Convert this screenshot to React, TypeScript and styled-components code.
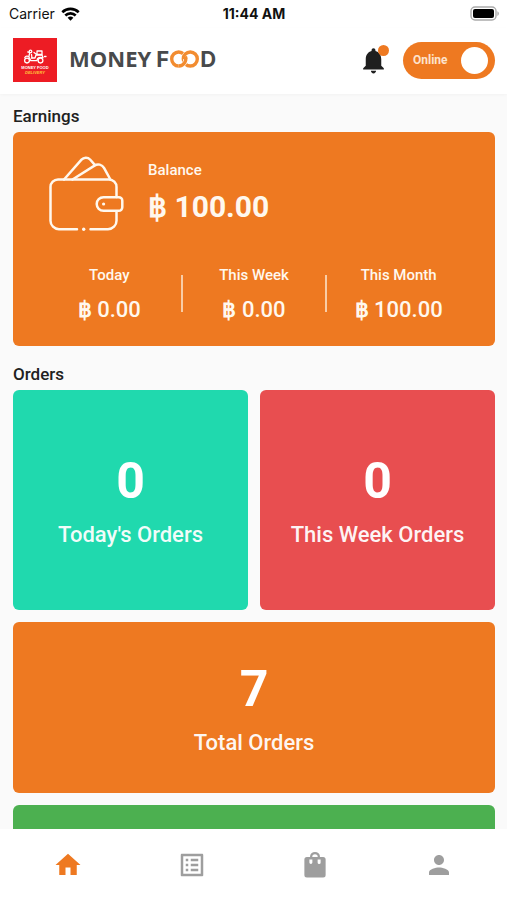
import React, { useState } from 'react';
import styled, { createGlobalStyle } from 'styled-components';

const ORANGE = '#ee7921';
const GREY = '#9e9e9e';

const GlobalStyle = createGlobalStyle`
  * { box-sizing: border-box; }
  body {
    margin: 0;
    background: #fafafa;
    color: #212121;
    font-family: Roboto, "Noto Sans", sans-serif;
  }
  h1, h2, p, dl, dd, dt { margin: 0; font-weight: inherit; }
`;

const Screen = styled.div`
  display: flex;
  flex-direction: column;
  height: 100vh;
`;

const StatusBar = styled.div`
  display: grid;
  grid-template-columns: 1fr auto 1fr;
  align-items: center;
  height: 28px;
  padding: 0 8px 0 9px;
  background: #fff;
  color: #111;
  font: 400 14px/20px Inter, sans-serif;
`;

const Carrier = styled.span`
  display: flex;
  align-items: center;
  gap: 6px;
`;

const Clock = styled.time`
  font-weight: 700;
`;

const BatteryIcon = styled.svg`
  justify-self: end;
`;

const AppBar = styled.header`
  display: flex;
  align-items: center;
  height: 66px;
  padding: 0 12px 2px 13px;
  background: #fff;
  box-shadow: 0 1px 3px rgba(0, 0, 0, 0.03);
`;

const Brand = styled.h1`
  display: flex;
  align-items: baseline;
  margin-left: 12px;
  padding-bottom: 3px;
  color: #484a4c;
  font: 700 22px/28px "Open Sans", sans-serif;
`;

const BrandSecond = styled.span`
  display: flex;
  align-items: center;
  margin-left: 5px;
  font-family: Inter, sans-serif;
`;

const BellButton = styled.button`
  position: relative;
  display: flex;
  margin-left: auto;
  padding: 0;
  border: 0;
  background: none;
  color: #1f1f1f;
`;

const BellDot = styled.span`
  position: absolute;
  top: 0;
  right: 0;
  width: 11px;
  height: 11px;
  border-radius: 50%;
  background: ${ORANGE};
`;

const SwitchLabel = styled.label`
  position: relative;
  display: flex;
  align-items: center;
  justify-content: space-between;
  width: 92px;
  height: 37px;
  margin-left: 14px;
  padding: 0 7px 0 10px;
  border-radius: 19px;
  background: ${ORANGE};
  color: #fde3cd;
  font-size: 12px;
  font-weight: 700;
`;

const SwitchInput = styled.input`
  position: absolute;
  inset: 0;
  width: 100%;
  height: 100%;
  margin: 0;
  opacity: 0;
`;

const SwitchKnob = styled.span<{ $on: boolean }>`
  order: ${({ $on }) => ($on ? 1 : -1)};
  width: 27px;
  height: 27px;
  border-radius: 50%;
  background: #fff;
`;

const Content = styled.main`
  flex: 1;
  min-height: 0;
  padding: 10px 12px 12px 13px;
  overflow-y: auto;
  scrollbar-width: none;
`;

const SectionTitle = styled.h2`
  margin-bottom: 4px;
  font-size: 17px;
  font-weight: 500;
  line-height: 24px;
`;

const EarningsCard = styled.section`
  margin-bottom: 16px;
  padding: 24px 24px 20px;
  border-radius: 6px;
  background: ${ORANGE};
  color: #fff8ee;
`;

const BalanceRow = styled.div`
  display: flex;
  gap: 24px;
  height: 76px;
  padding-left: 12px;
`;

const BalanceText = styled.dl`
  padding-top: 4px;
  font-size: 15px;
  font-weight: 500;
  line-height: 20px;
`;

const BalanceAmount = styled.dd`
  padding-top: 8px;
  font-size: 30px;
  font-weight: 700;
  line-height: 38px;
`;

const Periods = styled.dl`
  display: grid;
  grid-template-columns: repeat(3, 1fr);
  margin-top: 32px;
`;

const Period = styled.div`
  position: relative;
  padding-bottom: 2px;
  text-align: center;
  font-size: 15px;
  font-weight: 500;
  line-height: 22px;

  & + &::before {
    content: "";
    position: absolute;
    top: 11px;
    left: -1px;
    width: 2px;
    height: 37px;
    background: #f9cda6;
  }
`;

const PeriodAmount = styled.dd`
  padding-top: 10px;
  font-size: 22px;
  line-height: 28px;
`;

const Currency = styled.span`
  font-weight: 700;
`;

const OrderGrid = styled.div`
  display: grid;
  grid-template-columns: 1fr 1fr;
  gap: 12px;
`;

const OrderCard = styled.section<{ $color: string; $wide?: boolean }>`
  display: flex;
  flex-direction: column-reverse;
  align-items: center;
  justify-content: center;
  grid-column: ${({ $wide }) => ($wide ? '1 / -1' : 'auto')};
  min-height: ${({ $wide }) => ($wide ? 171 : 220)}px;
  border-radius: 6px;
  background: ${({ $color }) => $color};
  color: #fff;
`;

const OrderCount = styled.p`
  font-size: 50px;
  font-weight: 700;
  line-height: 60px;
`;

const OrderName = styled.h2`
  padding-top: 10px;
  font-size: 22px;
  font-weight: 500;
  line-height: 28px;
  color: rgba(255, 255, 255, 0.95);
`;

const TabBar = styled.nav`
  display: flex;
  flex: none;
  height: 71px;
  padding: 0 6px;
  background: #fff;
`;

const Tab = styled.a<{ $active?: boolean }>`
  display: flex;
  flex: 1;
  align-items: center;
  justify-content: center;
  color: ${({ $active }) => ($active ? ORANGE : GREY)};
`;

const Wifi = () => (
  <svg width="19" height="14" viewBox="0 0 19 14" aria-label="Wi-Fi" fill="none" stroke="#000" strokeWidth="2.6">
    <path d="M1.3 5.2a11.8 11.8 0 0 1 16.4 0" />
    <path d="M4.3 8.5a7.4 7.4 0 0 1 10.4 0" />
    <path d="M9.5 13.8 6.6 10.8a4.3 4.3 0 0 1 5.8 0z" fill="#000" stroke="none" />
  </svg>
);

const Battery = () => (
  <BatteryIcon width="29" height="16" viewBox="0 0 29 16" aria-label="Battery">
    <rect x="1" y="1" width="25" height="13" rx="4" fill="#fff" stroke="#aaa" strokeWidth="1.4" />
    <rect x="3" y="3" width="21" height="9" rx="2" fill="#000" />
    <path d="M27.4 5.2c2 1 2 3.8 0 4.8z" fill="#aaa" />
  </BatteryIcon>
);

const LogoText = styled.text`
  font-family: "Liberation Sans", sans-serif;
  font-weight: 700;
  font-size: 4px;
  text-anchor: middle;
`;

const Logo = () => (
  <svg width="44" height="44" viewBox="0 0 44 44" aria-label="Money Food Delivery">
    <rect width="44" height="44" fill="#ed1c24" />
    <g fill="none" stroke="#fff" strokeWidth="1.3" strokeLinecap="round" strokeLinejoin="round">
      <circle cx="14" cy="22.6" r="2.4" />
      <circle cx="27.5" cy="22.6" r="2.4" />
      <path d="M11.8 19.6c1-1.6 3-1.8 4-.8l2 3.8h6.2c0-3 3-4 6-2.8l-1-2.8h-6l-1 3h-3.5" />
      <path d="M16 18l.8-3.6-2-.4M19 20l-.5-3.5" />
      <circle cx="17.5" cy="13.4" r="1.3" />
      <path d="M24 13h5v3.5h-5zM21 14.5l2 1.5M31.5 18.5h1.5" />
    </g>
    <LogoText x="22" y="31" fill="#fff">MONEY FOOD</LogoText>
    <LogoText x="22" y="36" fill="#ffc23c" fontStyle="italic">DELIVERY</LogoText>
  </svg>
);

const Rings = () => (
  <svg width="31" height="18" viewBox="-1 0 31 18" aria-label="OO" fill="none" stroke="#f28c30" strokeWidth="3.4">
    <circle cx="8.7" cy="9" r="7" />
    <path d="M13.3 9A7 7 0 0 1 20.3 2" stroke="#fff" strokeWidth="4.6" />
    <circle cx="20.3" cy="9" r="7" />
    <path d="M15.7 9A7 7 0 0 1 8.7 16" stroke="#fff" strokeWidth="4.6" />
    <path d="M15.3 6.6A7 7 0 0 1 8.7 16" />
  </svg>
);

const Bell = () => (
  <svg width="31" height="31" viewBox="0 0 24 24" fill="currentColor" aria-hidden="true">
    <path d="M12 22c1.1 0 2-.9 2-2h-4c0 1.1.89 2 2 2zm6-6v-5c0-3.07-1.64-5.64-4.5-6.32V4c0-.83-.67-1.5-1.5-1.5s-1.5.67-1.5 1.5v.68C7.63 5.36 6 7.92 6 11v5l-2 2v1h16v-1l-2-2z" />
  </svg>
);

const Wallet = () => (
  <svg width="75" height="76" viewBox="0 0 75 76" fill="none" stroke="#fff8ee" strokeWidth="2.5" strokeLinecap="round" strokeLinejoin="round" aria-hidden="true">
    <path d="M28 73.2H10a8.5 8.5 0 0 1-8.5-8.5V31a7.5 7.5 0 0 1 7.5-7.5h51a7.5 7.5 0 0 1 7.5 7.5v10M67.5 56v8.7a8.5 8.5 0 0 1-8.5 8.5H41.5" />
    <circle cx="34.7" cy="73.2" r="1.7" fill="#fff8ee" stroke="none" />
    <path d="M54.5 41.2h15.3a3.5 3.5 0 0 1 3.5 3.5v6.6a3.5 3.5 0 0 1-3.5 3.5H54.5a6.8 6.8 0 0 1 0-13.6z" />
    <circle cx="54.6" cy="48" r="1.6" fill="#fff8ee" stroke="none" />
    <path d="M15 23.5 32.5 3.7a5.8 5.8 0 0 1 8.6-.2l4.7 5.3" />
    <path d="M23.5 23.5 45.5 9.6a6.6 6.6 0 0 1 9.5 2.3l6.4 11.6" />
  </svg>
);

const TabIcon = ({ d }: { d: string }) => (
  <svg width="30" height="30" viewBox="0 0 24 24" fill="currentColor" aria-hidden="true">
    <path fillRule="evenodd" d={d} />
  </svg>
);

const tabs = [
  { name: 'Home', d: 'M10 20v-6h4v6h5v-8h3L12 3 2 12h3v8z' },
  {
    name: 'Orders',
    d: 'M19 5v14H5V5h14m1.1-2H3.9c-.5 0-.9.4-.9.9v16.2c0 .4.4.9.9.9h16.2c.4 0 .9-.5.9-.9V3.9c0-.5-.5-.9-.9-.9zM11 7h6v2h-6V7zm0 4h6v2h-6v-2zm0 4h6v2h-6v-2zM7 7h2v2H7V7zm0 4h2v2H7v-2zm0 4h2v2H7v-2z',
  },
  {
    name: 'Products',
    d: 'M8 5.5a4 4 0 0 1 8 0h2.5A2 2 0 0 1 20.5 7.5v12.5a2 2 0 0 1-2 2h-13a2 2 0 0 1-2-2V7.5a2 2 0 0 1 2-2zm1.8 0h4.4a2.2 2.2 0 0 0-4.4 0zM7.5 7.5v2.5a1.2 1.2 0 0 0 2.4 0V7.5zm6.6 0v2.5a1.2 1.2 0 0 0 2.4 0V7.5z',
  },
  { name: 'Profile', d: 'M12 12c2.21 0 4-1.79 4-4s-1.79-4-4-4-4 1.79-4 4 1.79 4 4 4zm0 2c-2.67 0-8 1.34-8 4v2h16v-2c0-2.66-5.33-4-8-4z' },
];

const periods = [
  { name: 'Today', amount: '0.00' },
  { name: 'This Week', amount: '0.00' },
  { name: 'This Month', amount: '100.00' },
];

export default function App() {
  const [online, setOnline] = useState(true);

  return (
    <Screen>
      <GlobalStyle />
      <StatusBar>
        <Carrier>Carrier <Wifi /></Carrier>
        <Clock>11:44 AM</Clock>
        <Battery />
      </StatusBar>
      <AppBar>
        <Logo />
        <Brand>
          MONEY
          <BrandSecond>F<Rings />D</BrandSecond>
        </Brand>
        <BellButton type="button" aria-label="Notifications">
          <Bell />
          <BellDot />
        </BellButton>
        <SwitchLabel>
          <SwitchInput type="checkbox" role="switch" checked={online} onChange={(e) => setOnline(e.target.checked)} />
          {online ? 'Online' : 'Offline'}
          <SwitchKnob $on={online} />
        </SwitchLabel>
      </AppBar>
      <Content>
        <SectionTitle>Earnings</SectionTitle>
        <EarningsCard>
          <BalanceRow>
            <Wallet />
            <BalanceText>
              <dt>Balance</dt>
              <BalanceAmount>฿ 100.00</BalanceAmount>
            </BalanceText>
          </BalanceRow>
          <Periods>
            {periods.map((p) => (
              <Period key={p.name}>
                <dt>{p.name}</dt>
                <PeriodAmount><Currency>฿</Currency> {p.amount}</PeriodAmount>
              </Period>
            ))}
          </Periods>
        </EarningsCard>
        <SectionTitle>Orders</SectionTitle>
        <OrderGrid>
          <OrderCard $color="#20d9ae">
            <OrderName>Today's Orders</OrderName>
            <OrderCount>0</OrderCount>
          </OrderCard>
          <OrderCard $color="#e84e50">
            <OrderName>This Week Orders</OrderName>
            <OrderCount>0</OrderCount>
          </OrderCard>
          <OrderCard $color={ORANGE} $wide>
            <OrderName>Total Orders</OrderName>
            <OrderCount>7</OrderCount>
          </OrderCard>
          <OrderCard $color="#4cb050" $wide />
        </OrderGrid>
      </Content>
      <TabBar>
        {tabs.map((t, i) => (
          <Tab key={t.name} href={`#${t.name.toLowerCase()}`} aria-label={t.name} $active={i === 0}>
            <TabIcon d={t.d} />
          </Tab>
        ))}
      </TabBar>
    </Screen>
  );
}
